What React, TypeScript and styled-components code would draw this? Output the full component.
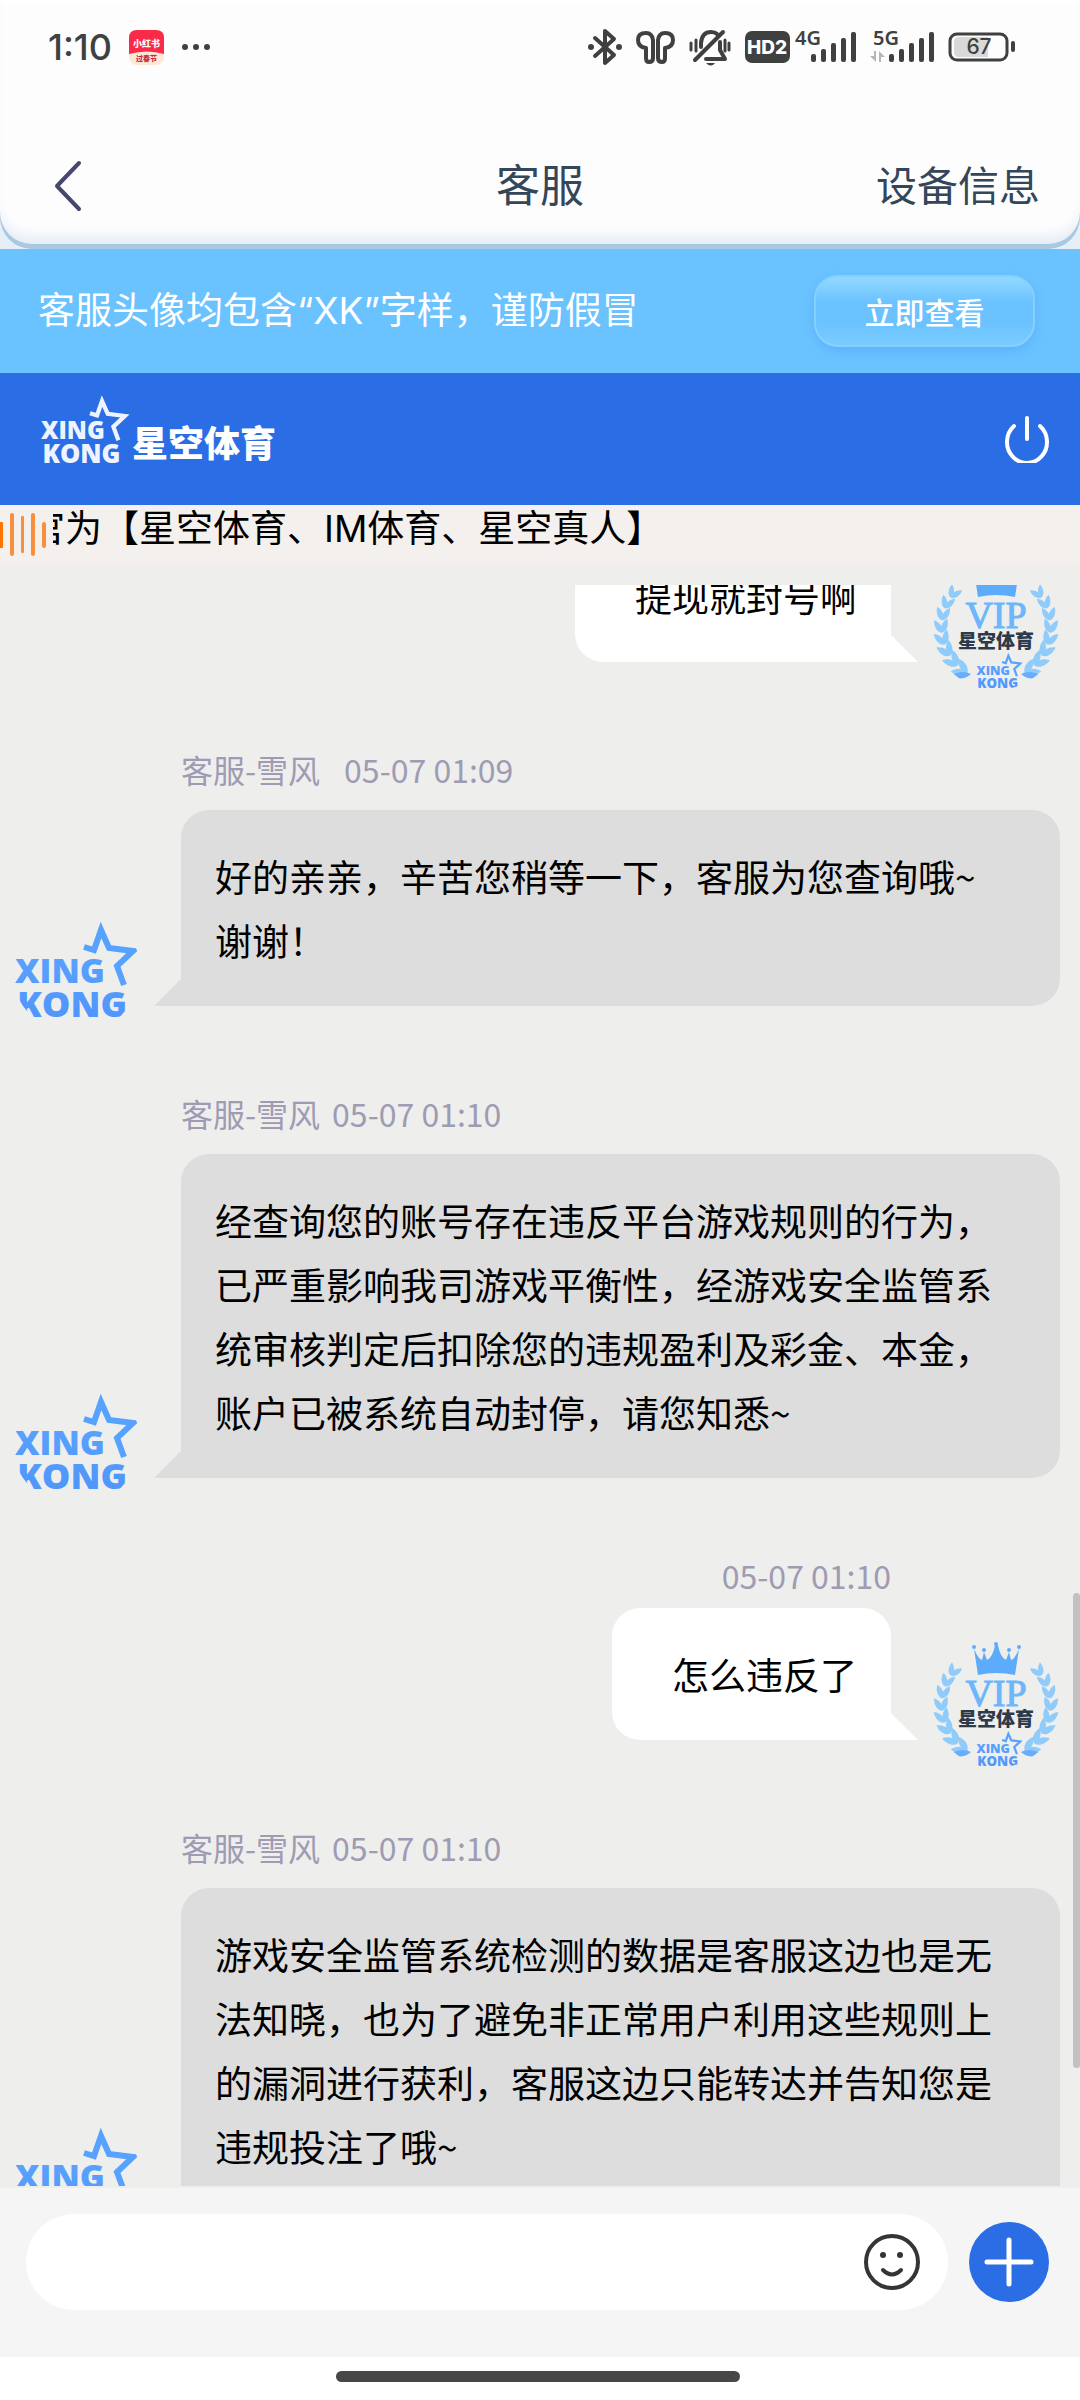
import React, { useId, useLayoutEffect, useRef } from "react";
import styled, { createGlobalStyle } from "styled-components";

const INK = "#3f4140";
const CJK = `"Noto Sans CJK SC", sans-serif`;
const LATIN_CJK = `Inter, "Noto Sans CJK SC", sans-serif`;

const GlobalStyle = createGlobalStyle`
  * { box-sizing: border-box; }
  body { margin: 0; background: #fff; font-family: ${CJK}; }
  button, input { font: inherit; border: 0; padding: 0; background: none; color: inherit; }
  h1, p { margin: 0; font-weight: 400; }
  svg { display: block; flex: none; }
`;

const Screen = styled.div`
  height: 100vh;
  display: flex;
  flex-direction: column;
  overflow: hidden;
`;

/* ---------- header card ---------- */

const HeaderBack = styled.div`
  background: #e6eef7;
  flex: none;
`;

const HeaderCard = styled.header`
  background: #fdfdfe;
  border-radius: 0 0 32px 32px;
  padding-bottom: 15px;
  box-shadow: inset 0 -5px 0 #a9c8e2, inset 0 -20px 14px -8px #e3ebf4, inset 0 14px 8px -8px #fff;
`;

const StatusBar = styled.div`
  height: 94px;
  padding: 0 65px 0 48px;
  display: flex;
  align-items: center;
  justify-content: space-between;
  color: ${INK};
`;

const StatusLeft = styled.div`
  display: flex;
  align-items: center;
  gap: 17px;
`;

const Clock = styled.time`
  font: 500 36px/48px Inter, sans-serif;
`;

const StatusRight = styled.div`
  display: flex;
  align-items: center;
  gap: 14px;
`;

const SignalGroup = styled.div`
  display: flex;
  gap: 5px;
`;

const NavBar = styled.nav`
  margin-top: 44px;
  height: 96px;
  padding: 0 40px;
  display: grid;
  grid-template-columns: 1fr auto 1fr;
  align-items: center;
  color: #344659;
`;

const BackButton = styled.button`
  justify-self: start;
  padding-left: 14px;
`;

const Title = styled.h1`
  padding-bottom: 6px;
  font-size: 44px;
  line-height: 64px;
`;

const DeviceButton = styled.button`
  justify-self: end;
  padding-bottom: 6px;
  font-size: 41px;
  line-height: 64px;
`;

/* ---------- banners ---------- */

const Banner = styled.section`
  flex: none;
  height: 124px;
  padding: 0 45px 0 38px;
  display: flex;
  align-items: center;
  justify-content: space-between;
  background: #6ac2ff;
  color: #fff;
  font: 400 37px/48px ${LATIN_CJK};
`;

const ViewButton = styled.button`
  width: 221px;
  height: 72px;
  border: 2px solid #86d0ff;
  border-radius: 24px;
  background: linear-gradient(#92d9ff, #6ac2ff 38%, #6ac2ff 68%, #7bcdff);
  box-shadow: 0 4px 8px #5db2fb;
  font: 500 30px/40px ${CJK};
`;

const BrandBar = styled.section`
  flex: none;
  height: 132px;
  padding: 0 30px 0 40px;
  display: flex;
  align-items: center;
  justify-content: space-between;
  background: #2b6de5;
  color: #fff;
`;

const Brand = styled.div`
  display: flex;
  align-items: center;
  gap: 2px;
  padding-bottom: 20px;
`;

const BrandName = styled.span`
  padding-top: 24px;
  font: 900 36px/48px ${CJK};
`;

const Notice = styled.section`
  flex: none;
  height: 60px;
  display: flex;
  align-items: flex-start;
  gap: 7px;
  background: #f4f0ed;
  color: #000;
`;

const MarqueeWindow = styled.div`
  flex: 1;
  overflow: hidden;
`;

const MarqueeText = styled.p`
  margin-left: -25px;
  white-space: nowrap;
  font: 400 37px/48px ${LATIN_CJK};
`;

/* ---------- chat ---------- */

const ChatPanel = styled.main`
  flex: 1;
  min-height: 0;
  position: relative;
  display: flex;
  padding: 20px 0 2px;
  background: #eeeeec;
`;

const ChatScroll = styled.div`
  flex: 1;
  overflow-y: auto;
  scrollbar-width: none;
`;

const ScrollThumb = styled.div`
  position: absolute;
  right: 0;
  bottom: 120px;
  width: 7px;
  height: 475px;
  border-radius: 4px;
  background: #c1c1c1;
`;

const Message = styled.article<{ $mine?: boolean }>`
  display: flex;
  flex-direction: ${(p) => (p.$mine ? "row-reverse" : "row")};
  align-items: flex-end;
  gap: 41px;
  padding: ${(p) => (p.$mine ? "49px 20px 0 12px" : "59px 20px 0 12px")};
`;

const Avatar = styled.div`
  flex: none;
  width: 128px;
  height: 128px;
  overflow: hidden;
  border-radius: 50%;
`;

const CroppedLogo = styled.div`
  height: 111px;
  padding: 14px 0 0 2px;
  overflow: hidden;
`;

const Content = styled.div<{ $mine?: boolean }>`
  flex: 1;
  display: flex;
  flex-direction: column;
  align-items: ${(p) => (p.$mine ? "flex-end" : "stretch")};
  padding-bottom: 28px;
`;

const Meta = styled.div<{ $mine?: boolean; $gap: number }>`
  display: flex;
  gap: ${(p) => p.$gap}px;
  margin-bottom: ${(p) => (p.$mine ? 13 : 21)}px;
  color: #9e9bb3;
  font-size: 32px;
  line-height: 40px;
`;

const Bubble = styled.p<{ $mine?: boolean }>`
  position: relative;
  padding: ${(p) => (p.$mine ? "34px 34px 34px 60px" : "34px")};
  border-radius: ${(p) => (p.$mine ? "28px 28px 0 28px" : "28px 28px 28px 0")};
  background: ${(p) => (p.$mine ? "#fff" : "#ddd")};
  color: #000;
  font-size: 37px;
  line-height: 64px;
  white-space: pre-line;

  &::after {
    content: "";
    position: absolute;
    bottom: 0;
    ${(p) => (p.$mine ? "left: 100%" : "right: 100%")};
    border-bottom: 27px solid ${(p) => (p.$mine ? "#fff" : "#ddd")};
    ${(p) => (p.$mine ? "border-right" : "border-left")}: 27px solid transparent;
  }
`;

/* ---------- composer ---------- */

const Composer = styled.form`
  flex: none;
  display: flex;
  align-items: center;
  gap: 21px;
  padding: 26px 31px 47px 26px;
  background: #f5f5f5;
`;

const InputPill = styled.div`
  flex: 1;
  height: 96px;
  padding: 0 28px 0 40px;
  display: flex;
  align-items: center;
  gap: 16px;
  border-radius: 48px;
  background: #fff;
`;

const TextInput = styled.input`
  flex: 1;
  min-width: 0;
  height: 64px;
  font-size: 37px;
  outline: none;
`;

const IconButton = styled.button`
  flex: none;
`;

const HomeArea = styled.div`
  flex: none;
  height: 43px;
  display: flex;
  align-items: center;
  justify-content: center;
  padding: 0 4px 4px 0;
  background: #fff;
`;

const HomeBar = styled.div`
  width: 404px;
  height: 11px;
  border-radius: 6px;
  background: #474747;
`;

/* ---------- drawings ---------- */

function XingKong({ width, light }: { width: number; light?: boolean }) {
  const id = useId();
  const paint = light ? "#eef4ff" : `url(#${id})`;
  return (
    <svg width={width} height={Math.round((width * 100) / 126)} viewBox="0 0 126 100">
      <defs>
        <linearGradient id={id} x1="0" y1="0" x2="0" y2="100" gradientUnits="userSpaceOnUse">
          <stop offset="0" stopColor="#5fa9ff" />
          <stop offset="1" stopColor="#4f95fb" />
        </linearGradient>
      </defs>
      <path
        d="M70 27 L80 30 L87 10 L95 28 L119 31 L103 46 L110 65"
        fill="none"
        stroke={light ? "#eef4ff" : "#57a2fe"}
        strokeWidth="6"
      />
      <g fill={paint} fontFamily="Open Sans, sans-serif" fontWeight="800">
        <text x="1" y="63" fontSize="34">XING</text>
        <text x="3" y="97" fontSize="36">KONG</text>
      </g>
    </svg>
  );
}

const LEAF = "M0 0 C3 -5 11 -5 17 -1 C11 4 4 4 0 0 Z";

function Laurel() {
  const nodes = Array.from({ length: 8 }, (_, i) => 122 + i * 13);
  return (
    <g>
      {nodes.map((deg, i) => {
        const a = (deg * Math.PI) / 180;
        const x = 64 + 54 * Math.cos(a);
        const y = 65 + 54 * Math.sin(a);
        const s = 1 - i * 0.03;
        return (
          <g key={deg} transform={`translate(${x} ${y}) scale(${s})`}>
            <path d={LEAF} transform={`rotate(${deg + 66})`} />
            <path d={LEAF} transform={`rotate(${deg + 118})`} />
          </g>
        );
      })}
      <path d="M39 112 Q30 107 18 114 Q30 120 39 112 Z" />
    </g>
  );
}

function VipBadge() {
  const id = useId();
  return (
    <svg width="128" height="128" viewBox="0 0 128 128">
      <defs>
        <linearGradient id={id} x1="0" y1="0" x2="0" y2="128" gradientUnits="userSpaceOnUse">
          <stop offset="0" stopColor="#8fccfb" />
          <stop offset="0.5" stopColor="#74bbfb" />
          <stop offset="1" stopColor="#62a9fb" />
        </linearGradient>
      </defs>
      <g fill={`url(#${id})`}>
        <Laurel />
        <g transform="translate(128 0) scale(-1 1)">
          <Laurel />
        </g>
      </g>
      <g fill="#5dacfc">
        <path d="M46 35 L42 9 Q47 20 50 20 L52 12 L55 20 Q61 17 63 5 L66 5 Q68 17 74 20 L77 12 L79 20 Q82 20 87 9 L83 35 Q64 31 46 35 Z" />
        <circle cx="42" cy="7" r="2" />
        <circle cx="52" cy="10" r="2" />
        <circle cx="64" cy="4" r="2" />
        <circle cx="77" cy="10" r="2" />
        <circle cx="87" cy="7" r="2" />
      </g>
      <text x="64" y="66" textAnchor="middle" fontFamily="Liberation Serif, serif" fontSize="38" fill="#6db6fb" stroke="#6db6fb">VIP</text>
      <text x="64" y="86" textAnchor="middle" fontFamily="Noto Sans CJK SC, sans-serif" fontWeight="900" fontSize="19" fill="#2c3a4b">星空体育</text>
      <g transform="translate(44 90)">
        <XingKong width={47} />
      </g>
    </svg>
  );
}

function AppIcon() {
  return (
    <svg width="35" height="35" viewBox="0 0 35 35">
      <rect width="35" height="35" rx="8" fill="#fde8d8" />
      <path d="M0 24 V8 Q0 0 8 0 H27 Q35 0 35 8 V24 Q18 19 0 24 Z" fill="#fb2a49" />
      <g textAnchor="middle" fontFamily="Noto Sans CJK SC, sans-serif" fontWeight="900">
        <text x="17.5" y="17" fontSize="9" fill="#fff">小红书</text>
        <text x="17.5" y="31" fontSize="7" fill="#c8283c">过春节</text>
      </g>
    </svg>
  );
}

function Dots() {
  return (
    <svg width="30" height="8" viewBox="0 0 30 8" fill={INK}>
      <circle cx="4" cy="4" r="3" />
      <circle cx="15" cy="4" r="3" />
      <circle cx="26" cy="4" r="3" />
    </svg>
  );
}

function Bluetooth() {
  return (
    <svg width="34" height="40" viewBox="0 0 34 40">
      <path d="M7 11 L26 28 L17 36 V4 L26 12 L7 29" fill="none" stroke={INK} strokeWidth="4" strokeLinejoin="round" strokeLinecap="round" />
      <circle cx="3" cy="20" r="3" fill={INK} />
      <circle cx="31" cy="20" r="3" fill={INK} />
    </svg>
  );
}

function Earbuds() {
  const bud = "M17 13 Q16 6 10 6 Q2 6 2 13 Q2 20 10 21 V31 Q10 35 13 35 Q17 35 17 31 Z";
  return (
    <svg width="39" height="40" viewBox="0 0 39 40" fill="none" stroke={INK} strokeWidth="4" strokeLinejoin="round">
      <path d={bud} />
      <path d={bud} transform="translate(39 0) scale(-1 1)" />
    </svg>
  );
}

function MutedBell() {
  return (
    <svg width="42" height="40" viewBox="0 0 42 40" fill="none" stroke={INK} strokeWidth="4" strokeLinecap="round">
      <path d="M34 5 L6 33" />
      <path d="M12 20 V16 Q13 5 22 5 Q26 5 28 7" />
      <path d="M31 15 V23 L36 32 H17" strokeLinejoin="round" />
      <path d="M2 16 V23 M40 16 V23" strokeWidth="3" />
      <path d="M7 13 V24 M36 13 V24" strokeWidth="3" />
      <path d="M17 36 H26 Q22 41 17 36 Z" fill={INK} stroke="none" />
    </svg>
  );
}

function HdBadge() {
  return (
    <svg width="45" height="40" viewBox="0 0 45 40">
      <rect y="4" width="45" height="32" rx="7" fill={INK} />
      <text x="22" y="27" textAnchor="middle" fontFamily="Inter, sans-serif" fontWeight="800" fontSize="19" fill="#fff">HD2</text>
    </svg>
  );
}

function Signal({ label, data }: { label: string; data?: boolean }) {
  const x0 = data ? 19 : 16;
  const width = data ? 64 : 61;
  return (
    <svg width={width} height="40" viewBox={`0 0 ${width} 40`} fill={INK}>
      <text x={data ? 3 : 0} y="18" fontFamily="Noto Sans, sans-serif" fontWeight="600" fontSize="20">{label}</text>
      {[8, 13, 19, 24, 30].map((h, i) => (
        <rect key={h} x={x0 + i * 10} y={35 - h} width="5" height={h} rx="2" />
      ))}
      {data && <path d="M0 29 H4 V24 H6 V35 Z M9 35 V24 L15 30 H11 V35 Z" fill="#b5b6b6" />}
    </svg>
  );
}

function Battery() {
  return (
    <svg width="67" height="40" viewBox="0 0 67 40">
      <rect x="2" y="7" width="57" height="26" rx="7" fill="none" stroke={INK} strokeWidth="3" />
      <path d="M40 10 V30 H11 Q6 30 6 25 V15 Q6 10 11 10 Z" fill="#d9d9da" />
      <text x="31" y="27" textAnchor="middle" fontFamily="Inter, sans-serif" fontWeight="500" fontSize="21" fill={INK}>67</text>
      <rect x="63" y="14" width="4" height="11" rx="2" fill={INK} />
    </svg>
  );
}

function SoundBars() {
  return (
    <svg width="46" height="60" viewBox="0 0 46 60" fill="#f78f3f">
      <rect x="-2" y="17" width="5" height="26" rx="1" fill="#ff7300" />
      <rect x="10" y="8" width="4" height="43" rx="2" />
      <rect x="21" y="11" width="3" height="37" rx="1" />
      <rect x="31" y="8" width="4" height="43" rx="2" />
      <rect x="42" y="17" width="4" height="26" rx="2" />
    </svg>
  );
}

/* ---------- data ---------- */

type Msg = { mine?: boolean; name?: string; time: string; gap?: number; text: string };

const MESSAGES: Msg[] = [
  { mine: true, time: "05-07 01:09", text: "提现就封号啊" },
  { name: "客服-雪风", time: "05-07 01:09", gap: 24, text: "好的亲亲，辛苦您稍等一下，客服为您查询哦~\n谢谢！" },
  {
    name: "客服-雪风",
    time: "05-07 01:10",
    text: "经查询您的账号存在违反平台游戏规则的行为，已严重影响我司游戏平衡性，经游戏安全监管系统审核判定后扣除您的违规盈利及彩金、本金，账户已被系统自动封停，请您知悉~",
  },
  { mine: true, time: "05-07 01:10", text: "怎么违反了" },
  {
    name: "客服-雪风",
    time: "05-07 01:10",
    text: "游戏安全监管系统检测的数据是客服这边也是无法知晓，也为了避免非正常用户利用这些规则上的漏洞进行获利，客服这边只能转达并告知您是违规投注了哦~",
  },
];

const INITIAL_SCROLL = 157;

export default function App() {
  const scroller = useRef<HTMLDivElement>(null);
  useLayoutEffect(() => {
    if (scroller.current) scroller.current.scrollTop = INITIAL_SCROLL;
  }, []);

  return (
    <Screen>
      <GlobalStyle />
      <HeaderBack>
        <HeaderCard>
          <StatusBar>
            <StatusLeft>
              <Clock>1:10</Clock>
              <AppIcon />
              <Dots />
            </StatusLeft>
            <StatusRight>
              <Bluetooth />
              <Earbuds />
              <MutedBell />
              <SignalGroup>
                <HdBadge />
                <Signal label="4G" />
              </SignalGroup>
              <Signal label="5G" data />
              <Battery />
            </StatusRight>
          </StatusBar>
          <NavBar>
            <BackButton type="button" aria-label="返回">
              <svg width="28" height="52" viewBox="0 0 28 52" fill="none" stroke="#46476f" strokeWidth="4" strokeLinecap="round" strokeLinejoin="round">
                <path d="M25 3 L3 26 L25 49" />
              </svg>
            </BackButton>
            <Title>客服</Title>
            <DeviceButton type="button">设备信息</DeviceButton>
          </NavBar>
        </HeaderCard>
      </HeaderBack>

      <Banner>
        <p>客服头像均包含“XK”字样，谨防假冒</p>
        <ViewButton type="button">立即查看</ViewButton>
      </Banner>

      <BrandBar>
        <Brand>
          <XingKong width={90} light />
          <BrandName>星空体育</BrandName>
        </Brand>
        <IconButton type="button" aria-label="退出">
          <svg width="46" height="48" viewBox="0 0 46 48" fill="none" stroke="#fff" strokeWidth="4" strokeLinecap="round">
            <path d="M23 3 V24" />
            <path d="M10 11 A20 21 0 1 0 36 11" />
          </svg>
        </IconButton>
      </BrandBar>

      <Notice>
        <SoundBars />
        <MarqueeWindow>
          <MarqueeText>官为【星空体育、IM体育、星空真人】</MarqueeText>
        </MarqueeWindow>
      </Notice>

      <ChatPanel>
        <ChatScroll ref={scroller}>
          {MESSAGES.map((m, i) => (
            <Message key={i} $mine={m.mine}>
              <Avatar>
                {m.mine ? (
                  <VipBadge />
                ) : (
                  <CroppedLogo>
                    <XingKong width={126} />
                  </CroppedLogo>
                )}
              </Avatar>
              <Content $mine={m.mine}>
                <Meta $mine={m.mine} $gap={m.gap ?? 12}>
                  {m.name && <span>{m.name}</span>}
                  <time>{m.time}</time>
                </Meta>
                <Bubble $mine={m.mine}>{m.text}</Bubble>
              </Content>
            </Message>
          ))}
        </ChatScroll>
        <ScrollThumb />
      </ChatPanel>

      <Composer onSubmit={(e) => e.preventDefault()}>
        <InputPill>
          <TextInput type="text" aria-label="消息" />
          <IconButton type="button" aria-label="表情">
            <svg width="56" height="56" viewBox="0 0 56 56" fill="none" stroke="#353535" strokeWidth="4" strokeLinecap="round">
              <circle cx="28" cy="28" r="26" />
              <path d="M19 36 Q28 45 37 36" />
              <circle cx="19" cy="21" r="3" fill="#353535" stroke="none" />
              <circle cx="36" cy="21" r="3" fill="#353535" stroke="none" />
            </svg>
          </IconButton>
        </InputPill>
        <IconButton type="button" aria-label="更多">
          <svg width="80" height="80" viewBox="0 0 80 80">
            <circle cx="40" cy="40" r="40" fill="#2b6de5" />
            <path d="M40 18 V62 M18 40 H62" stroke="#fff" strokeWidth="5" strokeLinecap="round" />
          </svg>
        </IconButton>
      </Composer>
      <HomeArea>
        <HomeBar />
      </HomeArea>
    </Screen>
  );
}
